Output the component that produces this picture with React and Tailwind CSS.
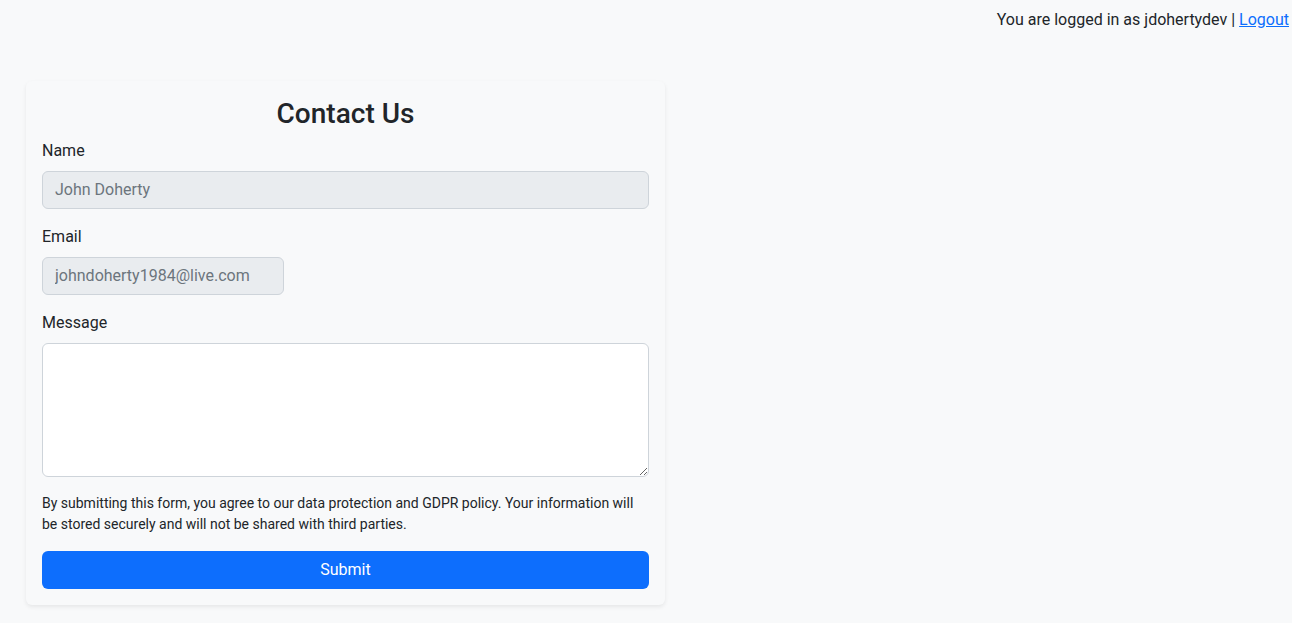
export default function App() {
  return (
    <div
      className="min-h-[623px] bg-[#f8f9fa] text-[#212529] text-[16px] leading-[24px]"
      style={{ fontFamily: 'Roboto, "Liberation Sans", sans-serif' }}
    >
      <div className="flex justify-end pt-2 pr-[3px]">
        <span>
          You are logged in as jdohertydev |{" "}
          <a href="#" className="text-[#0d6efd] underline">
            Logout
          </a>
        </span>
      </div>
      <div className="pl-[26px] mt-[49px]">
        <div className="w-[639px] bg-[#f8f9fa] rounded-md shadow-[0_2px_4px_rgba(0,0,0,0.075)] p-4">
          <h3 className="text-center text-[28px] leading-[33.6px] font-medium mb-2">
            Contact Us
          </h3>
          <div className="mb-4">
            <label className="block mb-2">Name</label>
            <input
              disabled
              value="John Doherty"
              readOnly
              className="block w-full h-[38px] px-3 bg-[#e9ecef] border border-[#ced4da] rounded-md text-[#6c757d] text-[16px] outline-none"
            />
          </div>
          <div className="mb-4">
            <label className="block mb-2">Email</label>
            <input
              disabled
              value="johndoherty1984@live.com"
              readOnly
              className="block w-[242px] h-[38px] px-3 bg-[#e9ecef] border border-[#ced4da] rounded-md text-[#6c757d] text-[16px] outline-none"
            />
          </div>
          <div className="mb-4">
            <label className="block mb-2">Message</label>
            <textarea className="block w-full h-[134px] px-3 py-1.5 bg-white border border-[#ced4da] rounded-md outline-none" />
          </div>
          <p className="text-[14px] leading-[21px] mb-4">
            By submitting this form, you agree to our data protection and GDPR policy. Your
            information will be stored securely and will not be shared with third parties.
          </p>
          <button className="block w-full h-[38px] bg-[#0d6efd] text-white rounded-md text-[16px]">
            Submit
          </button>
        </div>
      </div>
    </div>
  );
}
